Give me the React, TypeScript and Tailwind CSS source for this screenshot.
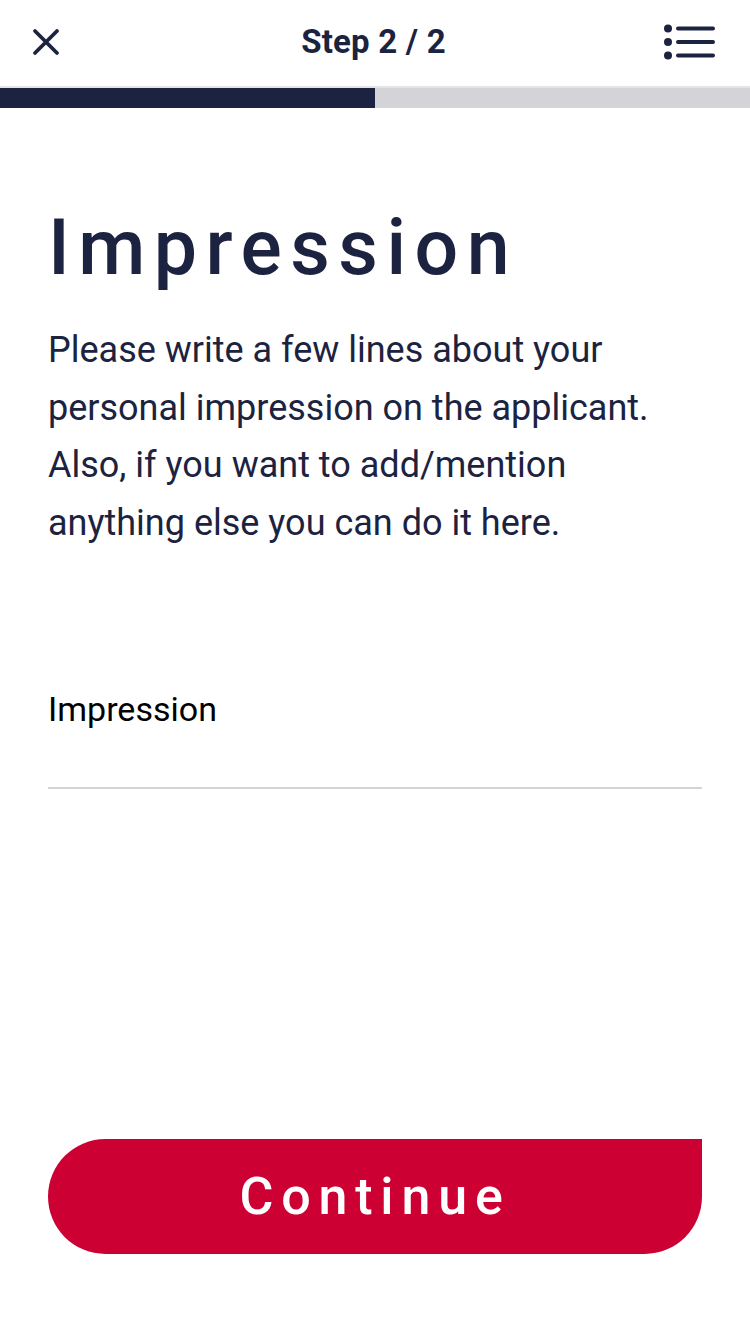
import React from 'react';

function CloseIcon() {
  return (
    <svg width="30" height="30" viewBox="0 0 30 30" fill="none">
      <path d="M4 4 L26 26 M26 4 L4 26" stroke="#1c2340" strokeWidth="3.8" strokeLinecap="round" />
    </svg>
  );
}

function ListIcon() {
  return (
    <svg width="53" height="36" viewBox="0 0 53 36" fill="none">
      <circle cx="5" cy="4.5" r="4" fill="#1c2340" />
      <circle cx="5" cy="18" r="4" fill="#1c2340" />
      <circle cx="5" cy="31.5" r="4" fill="#1c2340" />
      <path d="M15 4.5 H50 M15 18 H50 M15 31.5 H50" stroke="#1c2340" strokeWidth="4" strokeLinecap="round" />
    </svg>
  );
}

export default function App() {
  return (
    <div className="min-h-[1334px] w-[750px] bg-white flex flex-col font-['Roboto',sans-serif] text-[#1c2340]">
      {/* header */}
      <div className="h-[88px] grid grid-cols-[1fr_auto_1fr] items-center pl-[31px] pr-[34px] pb-[2px] border-b-2 border-[#e4e4e8]">
        <div className="flex">
          <button className="w-[30px] h-[30px] flex items-center justify-center">
            <CloseIcon />
          </button>
        </div>
        <div className="text-[33px] font-bold tracking-[0.2px]">Step 2 / 2</div>
        <div className="flex justify-end">
          <button className="flex items-center justify-center">
            <ListIcon />
          </button>
        </div>
      </div>

      {/* progress */}
      <div className="h-[20px] bg-[#d3d3d8] flex">
        <div className="w-1/2 bg-[#1c2340]" />
      </div>

      <div className="flex-1 flex flex-col px-[48px]">
        <h1 className="mt-[92px] text-[77px] leading-[96px] font-medium tracking-[0.11em]">Impression</h1>
        <p className="mt-[26px] text-[36px] leading-[57.5px]">
          Please write a few lines about your personal impression on the applicant. Also, if you want to add/mention
          anything else you can do it here.
        </p>

        <label className="mt-[137px] block text-[34px] leading-[41px] text-black">Impression</label>
        <div className="mt-[57px] h-[2px] bg-[#d4d4d4]" />

        <div className="flex-1" />

        <button className="mb-[80px] h-[115px] w-full bg-[#cc0033] rounded-l-[58px] rounded-br-[58px] text-white text-[52px] font-medium tracking-[0.15em]">
          Continue
        </button>
      </div>
    </div>
  );
}
